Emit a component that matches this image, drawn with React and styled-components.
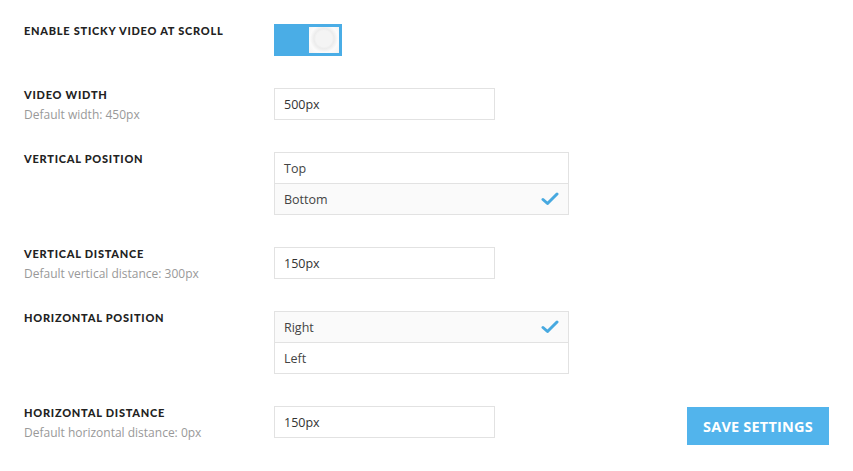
import styled, { createGlobalStyle } from 'styled-components';

const Global = createGlobalStyle`
    body {
        margin: 0;
        background: #fff;
        font-family: "Open Sans", "Noto Sans", sans-serif;
    }
`;

const Page = styled.div`
    padding: 24px 24px 0 24px;
    width: 853px;
    box-sizing: border-box;
`;

const Row = styled.div`
    display: flex;
    align-items: flex-start;
    margin-bottom: ${p => p.$gap ?? 32}px;
`;

const LabelCol = styled.div`
    width: 250px;
    flex-shrink: 0;
    padding-top: 1px;
`;

const Label = styled.div`
    font-family: "Lato", "DejaVu Sans", sans-serif;
    font-weight: 900;
    font-size: 11px;
    letter-spacing: 0.75px;
    color: #222;
    line-height: 12px;
`;

const Help = styled.div`
    margin-top: 8px;
    font-size: 12px;
    color: #999;
    line-height: 11px;
`;

const Toggle = styled.div`
    width: 68px;
    height: 32px;
    background: #4aade6;
    box-sizing: border-box;
    padding: 3px 3px 3px 35px;
`;

const Knob = styled.div`
    width: 30px;
    height: 26px;
    background: radial-gradient(circle at 50% 45%, #f4f4f4 0, #f4f4f4 8px, #ececec 10px, #fbfbfb 14px, #f2f2f2 100%);
`;

const Input = styled.div`
    width: 221px;
    height: 32px;
    box-sizing: border-box;
    border: 1px solid #e2e2e2;
    padding: 0 9px;
    display: flex;
    align-items: center;
    font-size: 12.5px;
    color: #333;
`;

const List = styled.div`
    width: 295px;
    border: 1px solid #e2e2e2;
    box-sizing: border-box;
`;

const Option = styled.div`
    height: 30px;
    display: flex;
    align-items: center;
    justify-content: space-between;
    padding: 0 9px 0 9px;
    font-size: 12.5px;
    color: #444;
    background: ${p => (p.$active ? '#fafafa' : '#fff')};
    & + & {
        border-top: 1px solid #e2e2e2;
    }
`;

const Check = () => (
    <svg width="18" height="14" viewBox="0 0 18 14">
        <path d="M2 7.5 L6.5 11.5 L16 2" fill="none" stroke="#47a9e0" strokeWidth="3" strokeLinecap="round" strokeLinejoin="round" />
    </svg>
);

const SaveButton = styled.button`
    margin-left: auto;
    margin-top: 1px;
    width: 142px;
    height: 38px;
    border: none;
    background: #52b4ec;
    color: #fff;
    font-family: "Open Sans", "Noto Sans", sans-serif;
    font-weight: 700;
    font-size: 14.5px;
    letter-spacing: 0.2px;
    cursor: pointer;
`;

function OptionList({ options, value }) {
    return (
        <List>
            {options.map(o => (
                <Option key={o} $active={o === value}>
                    <span>{o}</span>
                    {o === value && <Check />}
                </Option>
            ))}
        </List>
    );
}

export default function App() {
    return (
        <Page>
            <Global />
            <Row>
                <LabelCol>
                    <Label>ENABLE STICKY VIDEO AT SCROLL</Label>
                </LabelCol>
                <Toggle>
                    <Knob />
                </Toggle>
            </Row>
            <Row>
                <LabelCol>
                    <Label>VIDEO WIDTH</Label>
                    <Help>Default width: 450px</Help>
                </LabelCol>
                <Input>500px</Input>
            </Row>
            <Row>
                <LabelCol>
                    <Label>VERTICAL POSITION</Label>
                </LabelCol>
                <OptionList options={['Top', 'Bottom']} value="Bottom" />
            </Row>
            <Row>
                <LabelCol>
                    <Label>VERTICAL DISTANCE</Label>
                    <Help>Default vertical distance: 300px</Help>
                </LabelCol>
                <Input>150px</Input>
            </Row>
            <Row>
                <LabelCol>
                    <Label>HORIZONTAL POSITION</Label>
                </LabelCol>
                <OptionList options={['Right', 'Left']} value="Right" />
            </Row>
            <Row $gap={0}>
                <LabelCol>
                    <Label>HORIZONTAL DISTANCE</Label>
                    <Help>Default horizontal distance: 0px</Help>
                </LabelCol>
                <Input>150px</Input>
                <SaveButton>SAVE SETTINGS</SaveButton>
            </Row>
        </Page>
    );
}
